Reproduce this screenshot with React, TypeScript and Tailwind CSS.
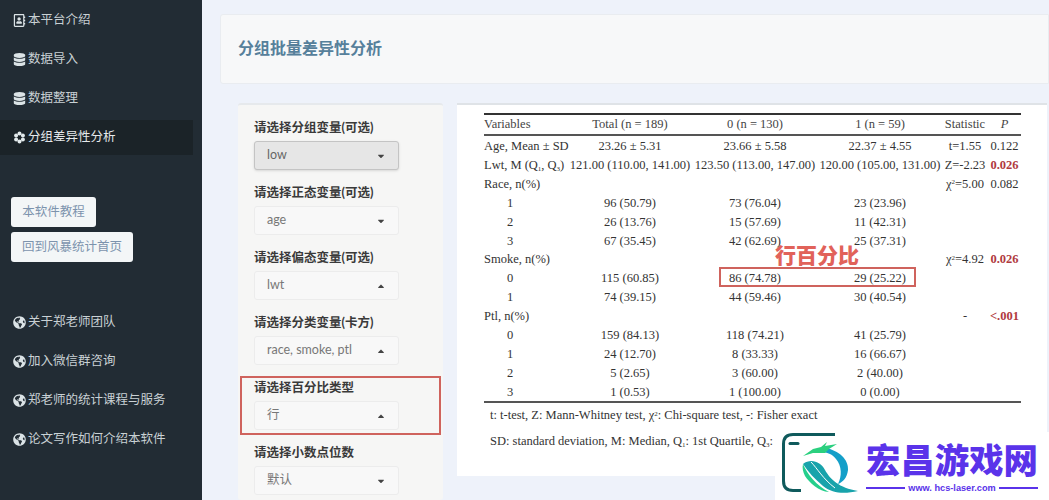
import React from "react";
import { FaDatabase, FaGlobeAmericas, FaRegAddressBook, FaCaretDown, FaCaretUp } from "react-icons/fa";

const sans = "font-['Liberation_Sans','Noto_Sans_CJK_SC',sans-serif]";
const latoCjk = "font-['Lato','Noto_Sans_CJK_SC',sans-serif]";

const Flower = () => (
  <svg width="13" height="13" viewBox="0 0 13 13" fill="#e3eaec">
    <circle cx="6.500" cy="2.600" r="2" />
    <circle cx="6.500" cy="10.400" r="2" />
    <circle cx="3.100" cy="4.500" r="2" />
    <circle cx="9.900" cy="4.500" r="2" />
    <circle cx="3.100" cy="8.500" r="2" />
    <circle cx="9.900" cy="8.500" r="2" />
    <circle cx="6.500" cy="6.500" r="1.300" fill="#1b2328" />
  </svg>
);

function NavItem({ icon, label, active }: { icon: React.ReactNode; label: string; active?: boolean }) {
  return (
    <div className={`flex w-[193px] items-center gap-[2px] pl-[13px] text-[12.5px] text-[#c9d1d4] ${active ? "my-[2px] h-[35px] bg-[#1b2328] text-[#e6eaec]" : "h-[39px]"}`}>
      <span className="flex w-[13px] justify-center text-[13px] text-[#dbe3e6]">{icon}</span>
      <span>{label}</span>
    </div>
  );
}

function Field({ label, value, open, active }: { label: string; value: string; open?: boolean; active?: boolean }) {
  return (
    <div className="flex h-[65px] flex-col">
      <div className={`flex h-[19px] items-center text-[12.5px] font-bold text-[#3a3a3a] ${latoCjk}`}>{label}</div>
      <div className={`mt-[3px] flex h-[29px] w-[145px] items-center justify-between rounded-[3px] border pl-[12px] pr-[12px] text-[12.5px] ${latoCjk} ${active ? "border-[#c4c4c4] bg-[#e6e6e6] text-[#666] shadow-sm" : "border-[#ececec] bg-[#f8f8f8] text-[#777]"}`}>
        <span>{value}</span>
        {open ? <FaCaretUp className="text-[10px] text-[#444]" /> : <FaCaretDown className="text-[10px] text-[#444]" />}
      </div>
    </div>
  );
}

const Q = ({ n }: { n: number }) => (
  <>
    Q<sub className="text-[7px]">{n}</sub>
  </>
);

const Chi = () => (
  <>
    χ<sup className="text-[7px]">2</sup>
  </>
);

type R = [React.ReactNode, string, string, string, React.ReactNode?, string?, boolean?, boolean?];

const rows: R[] = [
  ["Age, Mean ± SD", "23.26 ± 5.31", "23.66 ± 5.58", "22.37 ± 4.55", "t=1.55", "0.122"],
  [<span>Lwt, M (<Q n={1} />, <Q n={3} />)</span>, "121.00 (110.00, 141.00)", "123.50 (113.00, 147.00)", "120.00 (105.00, 131.00)", "Z=-2.23", "0.026", true],
  ["Race, n(%)", "", "", "", <span><Chi />=5.00</span>, "0.082"],
  ["1", "96 (50.79)", "73 (76.04)", "23 (23.96)", "", "", false, true],
  ["2", "26 (13.76)", "15 (57.69)", "11 (42.31)", "", "", false, true],
  ["3", "67 (35.45)", "42 (62.69)", "25 (37.31)", "", "", false, true],
  ["Smoke, n(%)", "", "", "", <span><Chi />=4.92</span>, "0.026", true],
  ["0", "115 (60.85)", "86 (74.78)", "29 (25.22)", "", "", false, true],
  ["1", "74 (39.15)", "44 (59.46)", "30 (40.54)", "", "", false, true],
  ["Ptl, n(%)", "", "", "", "-", "<.001", true],
  ["0", "159 (84.13)", "118 (74.21)", "41 (25.79)", "", "", false, true],
  ["1", "24 (12.70)", "8 (33.33)", "16 (66.67)", "", "", false, true],
  ["2", "5 (2.65)", "3 (60.00)", "2 (40.00)", "", "", false, true],
  ["3", "1 (0.53)", "1 (100.00)", "0 (0.00)", "", "", false, true],
];

const gridCols = "grid grid-cols-[84px_124px_126px_124px_46px_33px] items-center whitespace-nowrap";

export default function App() {
  return (
    <div className={`flex h-[500px] w-[1049px] overflow-hidden bg-[#eef2fa] ${sans}`}>
      <aside className="flex h-full w-[202px] shrink-0 flex-col bg-[#222c34] pt-[1px]">
        <NavItem icon={<FaRegAddressBook />} label="本平台介绍" />
        <NavItem icon={<FaDatabase />} label="数据导入" />
        <NavItem icon={<FaDatabase />} label="数据整理" />
        <NavItem icon={<Flower />} label="分组差异性分析" active />
        <div className="mt-[40px] flex flex-col items-start gap-[5px] pl-[11px]">
          <button className="flex h-[30px] w-[85px] items-center justify-center rounded-[3px] bg-[#f3f6f7] text-[12.5px] text-[#7c93ad]">本软件教程</button>
          <button className="flex h-[30px] w-[122px] items-center justify-center rounded-[3px] bg-[#f3f6f7] text-[12.5px] text-[#7c93ad]">回到风暴统计首页</button>
        </div>
        <div className="mt-[41px] flex flex-col">
          <NavItem icon={<FaGlobeAmericas />} label="关于郑老师团队" />
          <NavItem icon={<FaGlobeAmericas />} label="加入微信群咨询" />
          <NavItem icon={<FaGlobeAmericas />} label="郑老师的统计课程与服务" />
          <NavItem icon={<FaGlobeAmericas />} label="论文写作如何介绍本软件" />
        </div>
      </aside>

      <main className="flex min-w-0 flex-1 flex-col pl-[18px] pt-[14px]">
        <div className="flex h-[70px] items-center rounded-l-[3px] border border-[#e9ecf0] bg-[#f7f8f9] pl-[17px] text-[16px] font-bold text-[#56809b]">
          分组批量差异性分析
        </div>

        <div className="mt-[19px] flex flex-1 items-start pl-[18px]">
          <div className="relative h-[397px] w-[205px] shrink-0 rounded-[3px] border-t-2 border-[#e6e9ec] bg-[#f6f6f5] pl-[16px] pt-[14px]">
            <Field label="请选择分组变量(可选)" value="low" active />
            <Field label="请选择正态变量(可选)" value="age" />
            <Field label="请选择偏态变量(可选)" value="lwt" open />
            <Field label="请选择分类变量(卡方)" value="race, smoke, ptl" open />
            <Field label="请选择百分比类型" value="行" open />
            <Field label="请选择小数点位数" value="默认" />
            <div className="absolute left-[2px] top-[271px] h-[59px] w-[201px] border-2 border-[#cf635d]" />
          </div>

          <div className="relative ml-[14px] h-[373px] w-[590px] shrink-0 border-t-2 border-[#dfe3e7] bg-white pl-[27px] pt-[8px] font-['Liberation_Serif',serif] text-[12.5px] text-[#333]">
            <div className="w-[537px]">
              <div className="border-t-2 border-[#333]" />
              <div className={`${gridCols} h-[19px] text-[#444]`}>
                <span>Variables</span>
                <span className="text-center">Total (n = 189)</span>
                <span className="text-center">0 (n = 130)</span>
                <span className="text-center">1 (n = 59)</span>
                <span className="text-center">Statistic</span>
                <span className="text-center italic">P</span>
              </div>
              <div className="mb-[1px] border-t-2 border-[#555]" />
              {rows.map((r, i) => (
                <div key={i} className={`${gridCols} h-[18.9px]`}>
                  <span className={r[7] ? "w-[52px] text-center" : ""}>{r[0]}</span>
                  <span className="text-center">{r[1]}</span>
                  <span className="text-center">{r[2]}</span>
                  <span className="text-center">{r[3]}</span>
                  <span className="text-center">{r[4]}</span>
                  <span className={`text-center ${r[6] ? "font-bold text-[#b03a3e]" : ""}`}>{r[5]}</span>
                </div>
              ))}
              <div className="border-t-2 border-[#555]" />
            </div>
            <div className="-mt-[1px] pl-[6px] leading-[26px] text-[#333]">
              <div className="whitespace-nowrap">t: t-test, Z: Mann-Whitney test, <Chi />: Chi-square test, -: Fisher exact</div>
              <div className="whitespace-nowrap">SD: standard deviation, M: Median, <Q n={1} />: 1st Quartile, <Q n={3} />: 3rd Quartile</div>
            </div>

            <div className="absolute left-[262px] top-[162px] h-[20px] w-[197px] border-2 border-[#cf635d]" />
            <div className="absolute left-[318px] top-[136px] font-['Noto_Sans_CJK_SC',sans-serif] text-[21px] font-black leading-[26px] text-[#e1625a]">行百分比</div>
          </div>
        </div>
      </main>

      <div className={`absolute left-[775px] top-[432px] flex h-[68px] w-[274px] items-start bg-white ${sans}`}>
        <svg width="88" height="68" viewBox="0 0 88 68" className="shrink-0">
          <path d="M60 2.500H18Q8.500 2.500 8.500 12V49Q8.500 58.500 18 58.500H26" fill="none" stroke="#0f5a5c" strokeWidth="3" />
          <path d="M15 11.500H23" stroke="#0f5a5c" strokeWidth="3" strokeLinecap="round" />
          <path d="M50 16C64 18 74 28 73 38C72 46 68 50 63 52C67 44 67 34 61 27C57 22 52 20 46 20Z" fill="#149fc9" />
          <path d="M28 24L38 17L46 15L52 10L50 14L62 12L54 17L50 21L38 21Z" fill="#2bd07f" />
          <path d="M28 32C36 26 46 30 50 38C55 47 64 56 83 59C70 62 58 62 48 54C40 47 33 40 28 32Z" fill="#18a3ab" />
          <path d="M36 30C42 36 48 47 60 56" fill="none" stroke="#ffffff" strokeWidth="1" />
          <path d="M28 32C32 42 42 54 54 60C44 60 34 50 30 44C28 40 27 36 28 32Z" fill="#25cf8c" />
        </svg>
        <div className="flex w-[175px] flex-col pl-[3px] pt-[6px]">
          <div className="whitespace-nowrap font-['Noto_Sans_CJK_SC',sans-serif] text-[34.4px] font-black leading-[40px] text-[#5a33ea]">宏昌游戏网</div>
          <div className="mt-[3px] flex items-center gap-[3px] text-[9.2px] font-bold leading-[14px] text-[#5a33ea]">
            <span className="h-[1.500px] flex-1 bg-[#5a33ea]" />
            <span className="whitespace-nowrap">www. hcs-laser.com</span>
            <span className="h-[1.500px] flex-1 bg-[#5a33ea]" />
          </div>
        </div>
      </div>
    </div>
  );
}
